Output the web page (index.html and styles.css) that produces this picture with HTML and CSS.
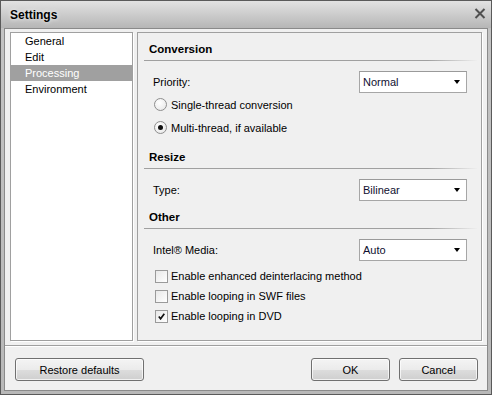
FILE: index.html
```html
<!DOCTYPE html>
<html>
<head>
<meta charset="utf-8">
<link rel="stylesheet" href="styles.css">
</head>
<body>
<div class="window">
  <div class="titlebar">
    <span class="title">Settings</span>
    <svg class="close" width="12" height="11" viewBox="0 0 12 11"><path d="M1.5 1 L10.5 10 M10.5 1 L1.5 10" stroke="#505050" stroke-width="2" fill="none"/></svg>
  </div>
  <div class="client">
    <div class="main">
      <div class="list">
        <div class="item">General</div>
        <div class="item">Edit</div>
        <div class="item selected">Processing</div>
        <div class="item">Environment</div>
      </div>
      <div class="panel">
        <div class="header">Conversion</div>
        <div class="row row-select">
          <span>Priority:</span>
          <div class="select"><span>Normal</span><i class="arrow"></i></div>
        </div>
        <div class="opt"><span class="radio"></span><span>Single-thread conversion</span></div>
        <div class="opt"><span class="radio checked"></span><span>Multi-thread, if available</span></div>
        <div class="header header-resize">Resize</div>
        <div class="row row-select">
          <span>Type:</span>
          <div class="select"><span>Bilinear</span><i class="arrow"></i></div>
        </div>
        <div class="header header-other">Other</div>
        <div class="row row-select">
          <span>Intel® Media:</span>
          <div class="select"><span>Auto</span><i class="arrow"></i></div>
        </div>
        <div class="checks">
          <div class="chk"><span class="box"></span><span>Enable enhanced deinterlacing method</span></div>
          <div class="chk"><span class="box"></span><span>Enable looping in SWF files</span></div>
          <div class="chk"><span class="box"><svg width="7" height="7" viewBox="0 0 7 7"><path d="M0.8 3.5 L2.6 5.8 L6.3 0.8" stroke="#111" stroke-width="1.7" fill="none"/></svg></span><span>Enable looping in DVD</span></div>
        </div>
      </div>
    </div>
    <div class="sep"></div>
    <div class="footer">
      <button class="btn btn-wide">Restore defaults</button>
      <div class="right-btns">
        <button class="btn">OK</button>
        <button class="btn">Cancel</button>
      </div>
    </div>
  </div>
</div>
</body>
</html>
```
FILE: styles.css
```css
html, body { margin: 0; padding: 0; }
body {
  font-family: "Liberation Sans", Arial, sans-serif;
  font-size: 11px;
  color: #000;
  background: #fff;
}
.window {
  width: 492px;
  height: 395px;
  box-sizing: border-box;
  border: 1px solid #5a5a5a;
  background: linear-gradient(#c4c4c4, #b8b8b8);
  display: flex;
  flex-direction: column;
}
.titlebar {
  height: 27px;
  flex: none;
  background: linear-gradient(#e2e2e2, #b6b6b6);
  display: flex;
  align-items: center;
  justify-content: space-between;
  padding: 0 5px 0 9px;
}
.title {
  font-weight: bold;
  font-size: 12px;
  text-shadow: 0 0 4px rgba(255,255,255,0.9);
}
.close { display: block; margin-top: -2px; }
.client {
  flex: 1;
  margin: 0 3px 3px;
  border: 1px solid #8a8a8a;
  background: #f0f0f0;
  display: flex;
  flex-direction: column;
}
.main {
  display: flex;
  gap: 4px;
  padding: 3px 5px 0;
  height: 309px;
  flex: none;
}
.list {
  width: 123px;
  box-sizing: border-box;
  border: 1px solid #a0a0a0;
  box-shadow: 1px 1px 0 #fff;
  background: #fff;
}
.item {
  height: 16px;
  line-height: 16px;
  padding-left: 14px;
}
.item.selected { background: #a0a0a0; color: #fff; }
.panel {
  width: 345px;
  box-sizing: border-box;
  border: 1px solid #a0a0a0;
  box-shadow: 1px 1px 0 #fff;
  display: flex;
  flex-direction: column;
}
.header {
  margin: 0 4px 0 6px;
  padding: 9px 0 4px 5px;
  line-height: 14px;
  font-weight: bold;
  font-size: 11.5px;
  border-bottom: 1px solid;
  border-image: linear-gradient(to right, #a0a0a0 85%, rgba(160,160,160,0)) 1;
}
.header-resize { margin-top: 2px; }
.header-other { margin-top: 0; }
.row-select {
  margin: 10px 14px 0 15px;
  display: flex;
  align-items: center;
  justify-content: space-between;
  height: 22px;
}
.select {
  width: 108px;
  height: 22px;
  box-sizing: border-box;
  border: 1px solid #a6a6a6;
  border-top-color: #9a9a9a;
  background: #fff;
  display: flex;
  align-items: center;
  justify-content: space-between;
  padding: 0 6px 0 3px;
  color: #101030;
}
.arrow {
  width: 0; height: 0;
  border-left: 3.5px solid transparent;
  border-right: 3.5px solid transparent;
  border-top: 4px solid #000;
}
.opt {
  height: 23px;
  display: flex;
  align-items: center;
  padding-left: 16px;
  gap: 4px;
}
.radio {
  width: 13px; height: 13px;
  box-sizing: border-box;
  border-radius: 50%;
  border: 1px solid #8e8e8e;
  background: radial-gradient(circle at 40% 35%, #ffffff, #e4e4e4);
  display: flex;
  align-items: center;
  justify-content: center;
}
.radio.checked::after {
  content: "";
  width: 5px; height: 5px;
  border-radius: 50%;
  background: #111;
}
.checks { margin-top: 5px; }
.chk {
  height: 20px;
  display: flex;
  align-items: center;
  padding-left: 17px;
  gap: 3px;
}
.box {
  width: 13px; height: 13px;
  box-sizing: border-box;
  border: 1px solid #9a9a9a;
  background: linear-gradient(135deg, #e8e8e8, #ffffff);
  display: flex;
  align-items: center;
  justify-content: center;
}
.box svg { display: block; }
.sep {
  margin-top: 4px;
  height: 1px;
  background: #a0a0a0;
  border-bottom: 1px solid #fff;
  flex: none;
}
.footer {
  display: flex;
  justify-content: space-between;
  padding: 11px 9px 0 10px;
}
.right-btns { display: flex; gap: 9px; }
.btn {
  font-family: "Liberation Sans", Arial, sans-serif;
  font-size: 11px;
  color: #000;
  width: 79px;
  height: 23px;
  border: 1px solid #707070;
  border-radius: 3px;
  background: linear-gradient(#f4f4f4 0%, #ebebeb 50%, #dddddd 51%, #cfcfcf 100%);
  box-shadow: inset 0 0 0 1px rgba(255,255,255,0.7);
  padding: 0;
}
.btn-wide { width: 129px; }
```
